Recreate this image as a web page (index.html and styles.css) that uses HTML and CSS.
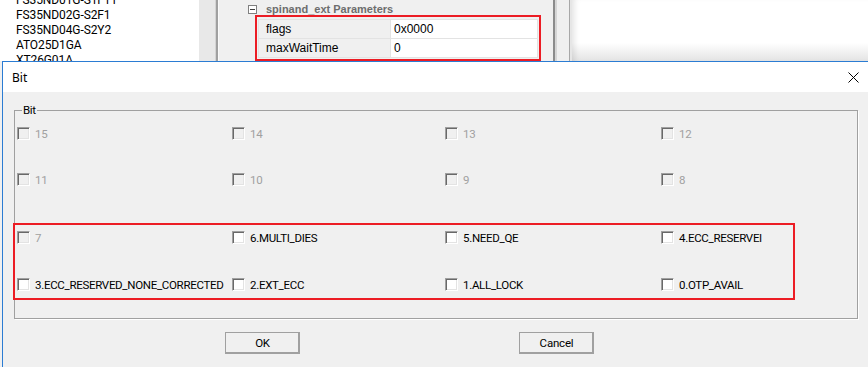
FILE: index.html
```html
<!DOCTYPE html>
<html>

<head>
	<title>Bit</title>
	<meta charset="UTF-8" />

	<link rel="stylesheet" href="styles.css">
</head>

<body>

<div class="screen">
	<div class="backdrop">
		<div class="list">
			<div class="list-items">
				<div>FS35ND01G-S1F11</div>
				<div>FS35ND02G-S2F1</div>
				<div>FS35ND04G-S2Y2</div>
				<div>ATO25D1GA</div>
				<div>XT26G01A</div>
			</div>
		</div>
		<div class="scroll"></div>
		<div class="props">
			<div class="props-head">
				<span class="toggle"></span>
				<span>spinand_ext Parameters</span>
			</div>
			<div class="mark-top">
				<table class="prop-table">
					<tr><td class="name">flags</td><td class="val">0x0000</td></tr>
					<tr><td class="name">maxWaitTime</td><td class="val">0</td></tr>
				</table>
			</div>
		</div>
		<div class="splitter"></div>
		<div class="view"></div>
	</div>

	<div class="dialog">
		<div class="titlebar">
			<span class="title">Bit</span>
			<svg class="close" width="11" height="11" viewBox="0 0 11 11">
				<path d="M0.5 0.5 L10.5 10.5 M10.5 0.5 L0.5 10.5" stroke="#000" stroke-width="1" fill="none" />
			</svg>
		</div>

		<div class="dialog-body">
			<fieldset class="group">
				<legend>Bit</legend>
				<div class="bits">
					<label class="bit off"><span class="box"></span>15</label>
					<label class="bit off"><span class="box"></span>14</label>
					<label class="bit off"><span class="box"></span>13</label>
					<label class="bit off"><span class="box"></span>12</label>

					<label class="bit off"><span class="box"></span>11</label>
					<label class="bit off"><span class="box"></span>10</label>
					<label class="bit off"><span class="box"></span>9</label>
					<label class="bit off"><span class="box"></span>8</label>

					<label class="bit off"><span class="box"></span>7</label>
					<label class="bit"><span class="box"></span>6.MULTI_DIES</label>
					<label class="bit"><span class="box"></span>5.NEED_QE</label>
					<label class="bit"><span class="box"></span>4.ECC_RESERVEI</label>

					<label class="bit"><span class="box"></span>3.ECC_RESERVED_NONE_CORRECTED</label>
					<label class="bit"><span class="box"></span>2.EXT_ECC</label>
					<label class="bit"><span class="box"></span>1.ALL_LOCK</label>
					<label class="bit"><span class="box"></span>0.OTP_AVAIL</label>
				</div>
			</fieldset>

			<div class="buttons">
				<button class="btn">OK</button>
				<button class="btn">Cancel</button>
			</div>

			<div class="mark"></div>
		</div>
	</div>
</div>

</body>

</html>
```

FILE: styles.css
```css
body {
  margin: 0;
  overflow: hidden;
  background: #f0f0f0;
  font-family: "Liberation Sans", Arial, sans-serif;
  font-size: 12px;
}

.screen {
  width: 868px;
  height: 367px;
  overflow: hidden;
}

/* app window behind the dialog */

.backdrop {
  display: flex;
  height: 61px;
  overflow: hidden;
}

.list {
  width: 199px;
  background: #fff;
  padding-left: 16px;
  box-sizing: border-box;
}

.list-items {
  margin-top: -7px;
  font-family: Roboto, "Liberation Sans", sans-serif;
  font-size: 12px;
  line-height: 15px;
  letter-spacing: -0.1px;
  color: #000;
}

.scroll {
  width: 17px;
  background: #e8e8e8;
  border-right: 2px solid #a0a0a0;
  box-shadow: inset -1px 0 0 #d4d4d4;
}

.props {
  width: 335px;
  background: #f0f0f0;
  border-left: 1px solid #fafafa;
  box-sizing: border-box;
}

.props-head {
  display: flex;
  align-items: center;
  height: 12px;
  padding: 3px 0 0 29px;
  font-size: 11px;
  font-weight: bold;
  color: #6d6d6d;
}

.toggle {
  position: relative;
  width: 7px;
  height: 7px;
  border: 1px solid #808080;
  background: #fff;
  margin-right: 9px;
}

.toggle::after {
  content: "";
  position: absolute;
  left: 1px;
  right: 1px;
  top: 3px;
  height: 1px;
  background: #404040;
}

.mark-top {
  width: fit-content;
  margin-left: 36px;
  padding: 2px 1px 1px 1px;
  border: 2px solid #ec1c24;
}

.prop-table {
  border-collapse: collapse;
  width: 280px;
}

.prop-table td {
  height: 18px;
  padding: 0 0 0 7px;
  border: 1px solid #e3e3e3;
  line-height: 18px;
  color: #000;
}

.prop-table .name {
  width: 124px;
  background: #f0f0f0;
}

.prop-table .val {
  padding-left: 3px;
  background: #fff;
}

.splitter {
  width: 19px;
  background: linear-gradient(to right,
    #8c8c8c 0, #8c8c8c 2px,
    #d6d6d6 2px, #d6d6d6 4px,
    #f0f0f0 4px, #f0f0f0 16px,
    #a8a8a8 16px, #a8a8a8 17px,
    #e6e6e6 17px);
}

.view {
  flex: 1;
  background: linear-gradient(to bottom, #fff 0, #fff 70%, #e4e4e4 100%);
  box-shadow: inset 6px 0 6px -4px rgba(0, 0, 0, 0.12);
}

/* dialog */

.dialog {
  margin-left: 2px;
  height: 306px;
  border-top: 1px solid #2b7cd3;
  border-left: 1px solid #2b7cd3;
  background: #f0f0f0;
}

.titlebar {
  display: flex;
  align-items: center;
  justify-content: space-between;
  height: 30px;
  padding: 0 9px 0 9px;
  background: #fff;
}

.title {
  font-family: "Noto Sans", "Liberation Sans", sans-serif;
  font-size: 12px;
  color: #000;
}

.close {
  display: block;
  margin-top: 1px;
}

.dialog-body {
  position: relative;
  display: flow-root;
  font-family: Roboto, "Liberation Sans", sans-serif;
  font-size: 11.5px;
  letter-spacing: -0.3px;
}

.group {
  width: 844px;
  box-sizing: border-box;
  margin: 11px 0 0 11px;
  padding: 10px 0 27px 2px;
  border: 1px solid #a0a0a0;
  box-shadow: 1px 1px 0 #fff;
}

.group legend {
  margin-left: 5px;
  padding: 0 1px;
  line-height: 14px;
  color: #000;
}

.bits {
  display: grid;
  grid-template-columns: 215px 213px 216px auto;
  grid-template-rows: 46px 58px 47px 13px;
  align-items: start;
}

.bit {
  display: flex;
  align-items: center;
  height: 13px;
  color: #000;
  white-space: nowrap;
}

.bit.off {
  color: #a0a0a0;
}

.box {
  width: 11px;
  height: 11px;
  margin-right: 5px;
  border: 1px solid;
  border-color: #a0a0a0 #fff #fff #a0a0a0;
  box-shadow: inset 1px 1px 0 #696969, inset -1px -1px 0 #e3e3e3;
  background: #fff;
}

.bit.off .box {
  background: #f0f0f0;
}

.buttons {
  display: flex;
  gap: 219px;
  margin-top: 13px;
  padding-left: 222px;
}

.btn {
  width: 75px;
  height: 22px;
  padding: 0;
  font-family: Roboto, "Liberation Sans", sans-serif;
  font-size: 11.5px;
  letter-spacing: -0.2px;
  color: #000;
  background: #f0f0f0;
  border: 1px solid;
  border-color: #fff #696969 #696969 #fff;
  box-shadow: inset -1px -1px 0 #a0a0a0;
  outline: 1px solid #a0a0a0;
  outline-offset: -1px;
}

/* red annotation drawn over the lower rows */
.mark {
  position: absolute;
  left: 10px;
  top: 131px;
  width: 778px;
  height: 73px;
  border: 2px solid #ec1c24;
}
```
